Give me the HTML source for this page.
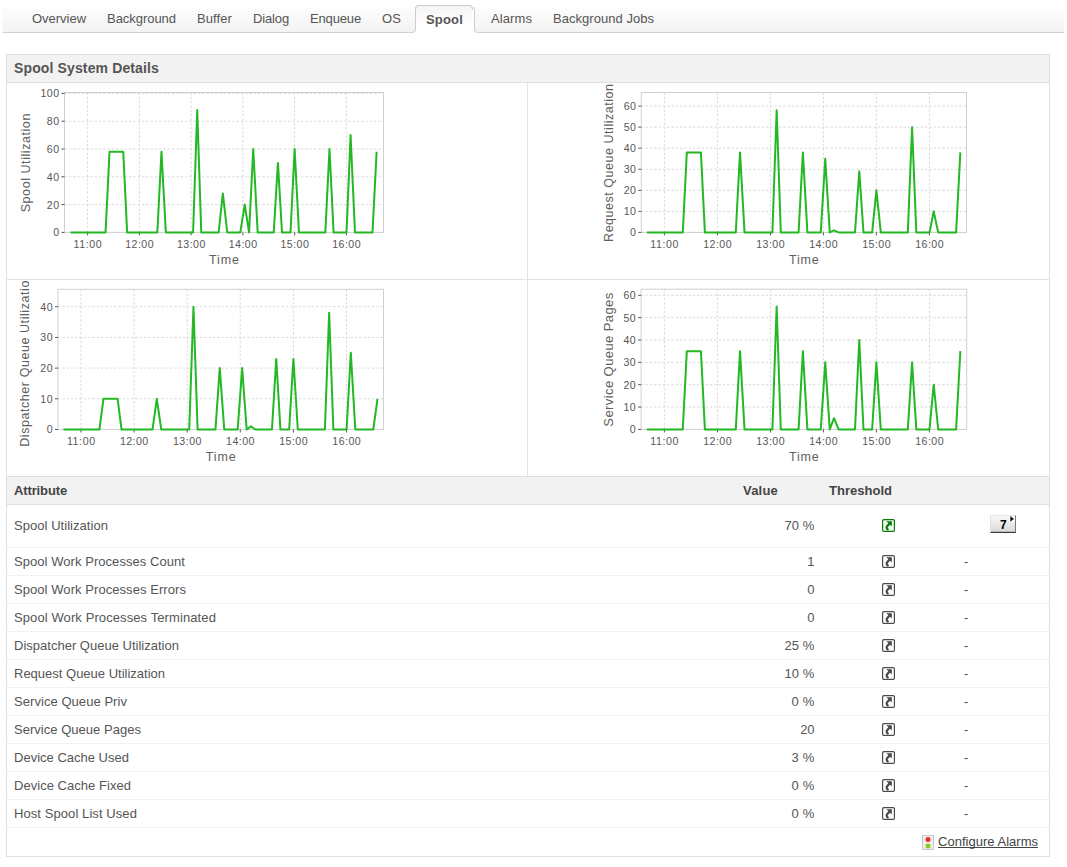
<!DOCTYPE html><html><head><meta charset="utf-8"><style>

*{margin:0;padding:0;box-sizing:border-box}
html,body{width:1067px;height:867px;background:#fff;overflow:hidden}
body{position:relative;font-family:"Liberation Sans", sans-serif;font-size:13px;color:#555}
.a{position:absolute;white-space:nowrap}
.tabbar{position:absolute;top:7px;height:26px;border-bottom:1px solid #d2d2d2;background:linear-gradient(#fdfdfd,#f3f3f3)}
.act{position:absolute;left:415px;top:5px;width:58px;height:24px;border:1px solid #c9c9c9;border-bottom:none;border-radius:4px 4px 0 0;background:linear-gradient(#f4f4f4,#fff 80%)}
.panel{position:absolute;left:6px;top:54px;width:1044px;height:803px;border:1px solid #dedede}
.hdr{position:absolute;left:7px;top:55px;width:1042px;height:28px;background:#f2f2f2;border-bottom:1px solid #dedede}
.vline{position:absolute;background:#e3e3e3}
.th{position:absolute;left:7px;top:476px;width:1042px;height:29px;background:#f2f2f2;border-top:1px solid #dedede;border-bottom:1px solid #dedede}
.row{position:absolute;left:7px;width:1042px;border-bottom:1px solid #f1f1f1}
.tk{font-family:"Liberation Sans", sans-serif;font-size:10.6px;fill:#585858}
.lb{font-family:"Liberation Sans", sans-serif;font-size:12.5px;fill:#606060}

</style></head><body>
<div class="act"></div>
<div class="tabbar" style="left:3px;width:413px;border-right:1px solid #cdcdcd;border-bottom-right-radius:4px"></div>
<div class="a" style="left:472px;top:10px;width:2px;height:20px;background:#fff"></div>
<div class="tabbar" style="left:474px;width:590px;border-left:1px solid #cdcdcd;border-bottom-left-radius:4px"></div>
<div class="a" style="top:7px;line-height:24px;font-size:13px;letter-spacing:-0.023px;left:32px;">Overview</div>
<div class="a" style="top:7px;line-height:24px;font-size:13px;letter-spacing:-0.039px;left:107px;">Background</div>
<div class="a" style="top:7px;line-height:24px;font-size:13px;letter-spacing:0.091px;left:197px;">Buffer</div>
<div class="a" style="top:7px;line-height:24px;font-size:13px;letter-spacing:-0.143px;left:253px;">Dialog</div>
<div class="a" style="top:7px;line-height:24px;font-size:13px;letter-spacing:-0.152px;left:310px;">Enqueue</div>
<div class="a" style="top:7px;line-height:24px;font-size:13px;letter-spacing:0.102px;left:382px;">OS</div>
<div class="a" style="top:7px;line-height:24px;font-size:13px;letter-spacing:0.091px;left:491px;">Alarms</div>
<div class="a" style="top:7px;line-height:24px;font-size:13px;letter-spacing:0.036px;left:553px;">Background Jobs</div>
<div class="a" style="top:8px;line-height:24px;font-size:13px;letter-spacing:0.178px;left:426px;font-weight:bold;">Spool</div>
<div class="panel"></div>
<div class="hdr"></div>
<div class="a" style="top:55px;line-height:27px;font-size:14px;letter-spacing:0.130px;left:14px;font-weight:bold;">Spool System Details</div>
<div class="vline" style="left:527px;top:83px;width:1px;height:393px"></div>
<div class="vline" style="left:7px;top:279px;width:1042px;height:1px"></div>
<svg class="a" style="left:0;top:0" width="1067" height="480" viewBox="0 0 1067 480">
<defs><clipPath id="c1"><rect x="7" y="83" width="520" height="196"/></clipPath><clipPath id="c2"><rect x="528" y="83" width="521" height="196"/></clipPath><clipPath id="c3"><rect x="7" y="280" width="520" height="196"/></clipPath><clipPath id="c4"><rect x="528" y="280" width="521" height="196"/></clipPath></defs>
<g clip-path="url(#c1)">
<line x1="64.5" y1="232.40" x2="383.5" y2="232.40" stroke="#dadada" stroke-width="1" stroke-dasharray="2.4,1.9"/>
<line x1="64.5" y1="204.60" x2="383.5" y2="204.60" stroke="#dadada" stroke-width="1" stroke-dasharray="2.4,1.9"/>
<line x1="64.5" y1="176.80" x2="383.5" y2="176.80" stroke="#dadada" stroke-width="1" stroke-dasharray="2.4,1.9"/>
<line x1="64.5" y1="149.00" x2="383.5" y2="149.00" stroke="#dadada" stroke-width="1" stroke-dasharray="2.4,1.9"/>
<line x1="64.5" y1="121.20" x2="383.5" y2="121.20" stroke="#dadada" stroke-width="1" stroke-dasharray="2.4,1.9"/>
<line x1="64.5" y1="93.40" x2="383.5" y2="93.40" stroke="#dadada" stroke-width="1" stroke-dasharray="2.4,1.9"/>
<line x1="87.60" y1="92.5" x2="87.60" y2="232.4" stroke="#dadada" stroke-width="1" stroke-dasharray="2.4,1.9"/>
<line x1="139.36" y1="92.5" x2="139.36" y2="232.4" stroke="#dadada" stroke-width="1" stroke-dasharray="2.4,1.9"/>
<line x1="191.12" y1="92.5" x2="191.12" y2="232.4" stroke="#dadada" stroke-width="1" stroke-dasharray="2.4,1.9"/>
<line x1="242.88" y1="92.5" x2="242.88" y2="232.4" stroke="#dadada" stroke-width="1" stroke-dasharray="2.4,1.9"/>
<line x1="294.64" y1="92.5" x2="294.64" y2="232.4" stroke="#dadada" stroke-width="1" stroke-dasharray="2.4,1.9"/>
<line x1="346.40" y1="92.5" x2="346.40" y2="232.4" stroke="#dadada" stroke-width="1" stroke-dasharray="2.4,1.9"/>
<rect x="64.5" y="92.5" width="319.0" height="139.9" fill="none" stroke="#d0d0d0" stroke-width="1"/>
<line x1="61.5" y1="232.40" x2="64.5" y2="232.40" stroke="#555" stroke-width="1"/>
<text x="59.56" y="236.30" text-anchor="end" class="tk" style="letter-spacing:0.456px">0</text>
<line x1="61.5" y1="204.60" x2="64.5" y2="204.60" stroke="#555" stroke-width="1"/>
<text x="59.56" y="208.50" text-anchor="end" class="tk" style="letter-spacing:0.464px">20</text>
<line x1="61.5" y1="176.80" x2="64.5" y2="176.80" stroke="#555" stroke-width="1"/>
<text x="59.56" y="180.70" text-anchor="end" class="tk" style="letter-spacing:0.464px">40</text>
<line x1="61.5" y1="149.00" x2="64.5" y2="149.00" stroke="#555" stroke-width="1"/>
<text x="59.56" y="152.90" text-anchor="end" class="tk" style="letter-spacing:0.464px">60</text>
<line x1="61.5" y1="121.20" x2="64.5" y2="121.20" stroke="#555" stroke-width="1"/>
<text x="59.56" y="125.10" text-anchor="end" class="tk" style="letter-spacing:0.464px">80</text>
<line x1="61.5" y1="93.40" x2="64.5" y2="93.40" stroke="#555" stroke-width="1"/>
<text x="59.57" y="97.30" text-anchor="end" class="tk" style="letter-spacing:0.466px">100</text>
<line x1="87.60" y1="232.4" x2="87.60" y2="235.4" stroke="#555" stroke-width="1"/>
<text x="87.91" y="248.20" text-anchor="middle" class="tk" style="letter-spacing:0.617px">11:00</text>
<line x1="139.36" y1="232.4" x2="139.36" y2="235.4" stroke="#555" stroke-width="1"/>
<text x="139.59" y="248.20" text-anchor="middle" class="tk" style="letter-spacing:0.461px">12:00</text>
<line x1="191.12" y1="232.4" x2="191.12" y2="235.4" stroke="#555" stroke-width="1"/>
<text x="191.35" y="248.20" text-anchor="middle" class="tk" style="letter-spacing:0.461px">13:00</text>
<line x1="242.88" y1="232.4" x2="242.88" y2="235.4" stroke="#555" stroke-width="1"/>
<text x="243.11" y="248.20" text-anchor="middle" class="tk" style="letter-spacing:0.461px">14:00</text>
<line x1="294.64" y1="232.4" x2="294.64" y2="235.4" stroke="#555" stroke-width="1"/>
<text x="294.87" y="248.20" text-anchor="middle" class="tk" style="letter-spacing:0.461px">15:00</text>
<line x1="346.40" y1="232.4" x2="346.40" y2="235.4" stroke="#555" stroke-width="1"/>
<text x="346.63" y="248.20" text-anchor="middle" class="tk" style="letter-spacing:0.461px">16:00</text>
<polyline points="70.52,232.40 105.56,232.40 109.49,151.78 114.10,151.78 118.66,151.78 123.26,151.78 127.14,232.40 157.32,232.40 161.46,151.78 165.86,232.40 193.09,232.40 197.23,110.08 201.26,232.40 218.66,232.40 222.85,193.48 227.25,232.40 240.29,232.40 244.69,204.60 249.09,232.40 253.23,149.00 257.68,232.40 273.73,232.40 277.92,162.90 282.01,232.40 290.50,232.40 294.64,149.00 298.94,232.40 325.33,232.40 329.47,149.00 333.62,232.40 346.50,232.40 350.59,135.10 354.99,232.40 372.49,232.40 376.63,151.78" fill="none" stroke="#24b824" stroke-width="2" stroke-linejoin="round"/>
<text x="224.4" y="264.2" text-anchor="middle" class="lb" style="letter-spacing:0.852px">Time</text>
<text transform="translate(29.8,162.7) rotate(-90)" x="0" y="0" text-anchor="middle" class="lb" style="font-size:12.50px;letter-spacing:0.562px">Spool Utilization</text>
</g>
<g clip-path="url(#c2)">
<line x1="641.3" y1="232.40" x2="966.5" y2="232.40" stroke="#dadada" stroke-width="1" stroke-dasharray="2.4,1.9"/>
<line x1="641.3" y1="211.35" x2="966.5" y2="211.35" stroke="#dadada" stroke-width="1" stroke-dasharray="2.4,1.9"/>
<line x1="641.3" y1="190.30" x2="966.5" y2="190.30" stroke="#dadada" stroke-width="1" stroke-dasharray="2.4,1.9"/>
<line x1="641.3" y1="169.25" x2="966.5" y2="169.25" stroke="#dadada" stroke-width="1" stroke-dasharray="2.4,1.9"/>
<line x1="641.3" y1="148.20" x2="966.5" y2="148.20" stroke="#dadada" stroke-width="1" stroke-dasharray="2.4,1.9"/>
<line x1="641.3" y1="127.15" x2="966.5" y2="127.15" stroke="#dadada" stroke-width="1" stroke-dasharray="2.4,1.9"/>
<line x1="641.3" y1="106.10" x2="966.5" y2="106.10" stroke="#dadada" stroke-width="1" stroke-dasharray="2.4,1.9"/>
<line x1="664.40" y1="92.5" x2="664.40" y2="232.4" stroke="#dadada" stroke-width="1" stroke-dasharray="2.4,1.9"/>
<line x1="717.40" y1="92.5" x2="717.40" y2="232.4" stroke="#dadada" stroke-width="1" stroke-dasharray="2.4,1.9"/>
<line x1="770.40" y1="92.5" x2="770.40" y2="232.4" stroke="#dadada" stroke-width="1" stroke-dasharray="2.4,1.9"/>
<line x1="823.40" y1="92.5" x2="823.40" y2="232.4" stroke="#dadada" stroke-width="1" stroke-dasharray="2.4,1.9"/>
<line x1="876.40" y1="92.5" x2="876.40" y2="232.4" stroke="#dadada" stroke-width="1" stroke-dasharray="2.4,1.9"/>
<line x1="929.40" y1="92.5" x2="929.40" y2="232.4" stroke="#dadada" stroke-width="1" stroke-dasharray="2.4,1.9"/>
<rect x="641.3" y="92.5" width="325.2" height="139.9" fill="none" stroke="#d0d0d0" stroke-width="1"/>
<line x1="638.3" y1="232.40" x2="641.3" y2="232.40" stroke="#555" stroke-width="1"/>
<text x="636.36" y="236.30" text-anchor="end" class="tk" style="letter-spacing:0.456px">0</text>
<line x1="638.3" y1="211.35" x2="641.3" y2="211.35" stroke="#555" stroke-width="1"/>
<text x="636.36" y="215.25" text-anchor="end" class="tk" style="letter-spacing:0.464px">10</text>
<line x1="638.3" y1="190.30" x2="641.3" y2="190.30" stroke="#555" stroke-width="1"/>
<text x="636.36" y="194.20" text-anchor="end" class="tk" style="letter-spacing:0.464px">20</text>
<line x1="638.3" y1="169.25" x2="641.3" y2="169.25" stroke="#555" stroke-width="1"/>
<text x="636.36" y="173.15" text-anchor="end" class="tk" style="letter-spacing:0.464px">30</text>
<line x1="638.3" y1="148.20" x2="641.3" y2="148.20" stroke="#555" stroke-width="1"/>
<text x="636.36" y="152.10" text-anchor="end" class="tk" style="letter-spacing:0.464px">40</text>
<line x1="638.3" y1="127.15" x2="641.3" y2="127.15" stroke="#555" stroke-width="1"/>
<text x="636.36" y="131.05" text-anchor="end" class="tk" style="letter-spacing:0.464px">50</text>
<line x1="638.3" y1="106.10" x2="641.3" y2="106.10" stroke="#555" stroke-width="1"/>
<text x="636.36" y="110.00" text-anchor="end" class="tk" style="letter-spacing:0.464px">60</text>
<line x1="664.40" y1="232.4" x2="664.40" y2="235.4" stroke="#555" stroke-width="1"/>
<text x="664.71" y="248.20" text-anchor="middle" class="tk" style="letter-spacing:0.617px">11:00</text>
<line x1="717.40" y1="232.4" x2="717.40" y2="235.4" stroke="#555" stroke-width="1"/>
<text x="717.63" y="248.20" text-anchor="middle" class="tk" style="letter-spacing:0.461px">12:00</text>
<line x1="770.40" y1="232.4" x2="770.40" y2="235.4" stroke="#555" stroke-width="1"/>
<text x="770.63" y="248.20" text-anchor="middle" class="tk" style="letter-spacing:0.461px">13:00</text>
<line x1="823.40" y1="232.4" x2="823.40" y2="235.4" stroke="#555" stroke-width="1"/>
<text x="823.63" y="248.20" text-anchor="middle" class="tk" style="letter-spacing:0.461px">14:00</text>
<line x1="876.40" y1="232.4" x2="876.40" y2="235.4" stroke="#555" stroke-width="1"/>
<text x="876.63" y="248.20" text-anchor="middle" class="tk" style="letter-spacing:0.461px">15:00</text>
<line x1="929.40" y1="232.4" x2="929.40" y2="235.4" stroke="#555" stroke-width="1"/>
<text x="929.63" y="248.20" text-anchor="middle" class="tk" style="letter-spacing:0.461px">16:00</text>
<polyline points="646.91,232.40 682.79,232.40 686.82,152.41 691.54,152.41 696.20,152.41 700.92,152.41 704.89,232.40 735.79,232.40 740.03,152.41 744.54,232.40 772.41,232.40 776.65,110.31 780.79,232.40 798.60,232.40 802.89,152.41 807.39,232.40 820.75,232.40 825.25,158.73 829.76,232.40 834.00,230.30 838.56,232.40 854.99,232.40 859.28,171.36 863.47,232.40 872.16,232.40 876.40,190.30 880.80,232.40 907.83,232.40 912.07,127.15 916.31,232.40 929.51,232.40 933.69,211.35 938.20,232.40 956.11,232.40 960.35,152.41" fill="none" stroke="#24b824" stroke-width="2" stroke-linejoin="round"/>
<text x="804.3" y="264.2" text-anchor="middle" class="lb" style="letter-spacing:0.852px">Time</text>
<text transform="translate(613.0,162.7) rotate(-90)" x="0" y="0" text-anchor="middle" class="lb" style="font-size:12.50px;letter-spacing:0.529px">Request Queue Utilization</text>
</g>
<g clip-path="url(#c3)">
<line x1="58.0" y1="429.50" x2="383.5" y2="429.50" stroke="#dadada" stroke-width="1" stroke-dasharray="2.4,1.9"/>
<line x1="58.0" y1="398.80" x2="383.5" y2="398.80" stroke="#dadada" stroke-width="1" stroke-dasharray="2.4,1.9"/>
<line x1="58.0" y1="368.10" x2="383.5" y2="368.10" stroke="#dadada" stroke-width="1" stroke-dasharray="2.4,1.9"/>
<line x1="58.0" y1="337.40" x2="383.5" y2="337.40" stroke="#dadada" stroke-width="1" stroke-dasharray="2.4,1.9"/>
<line x1="58.0" y1="306.70" x2="383.5" y2="306.70" stroke="#dadada" stroke-width="1" stroke-dasharray="2.4,1.9"/>
<line x1="81.00" y1="289.3" x2="81.00" y2="429.5" stroke="#dadada" stroke-width="1" stroke-dasharray="2.4,1.9"/>
<line x1="134.10" y1="289.3" x2="134.10" y2="429.5" stroke="#dadada" stroke-width="1" stroke-dasharray="2.4,1.9"/>
<line x1="187.20" y1="289.3" x2="187.20" y2="429.5" stroke="#dadada" stroke-width="1" stroke-dasharray="2.4,1.9"/>
<line x1="240.30" y1="289.3" x2="240.30" y2="429.5" stroke="#dadada" stroke-width="1" stroke-dasharray="2.4,1.9"/>
<line x1="293.40" y1="289.3" x2="293.40" y2="429.5" stroke="#dadada" stroke-width="1" stroke-dasharray="2.4,1.9"/>
<line x1="346.50" y1="289.3" x2="346.50" y2="429.5" stroke="#dadada" stroke-width="1" stroke-dasharray="2.4,1.9"/>
<rect x="58.0" y="289.3" width="325.5" height="140.2" fill="none" stroke="#d0d0d0" stroke-width="1"/>
<line x1="55.0" y1="429.50" x2="58.0" y2="429.50" stroke="#555" stroke-width="1"/>
<text x="53.06" y="433.40" text-anchor="end" class="tk" style="letter-spacing:0.456px">0</text>
<line x1="55.0" y1="398.80" x2="58.0" y2="398.80" stroke="#555" stroke-width="1"/>
<text x="53.06" y="402.70" text-anchor="end" class="tk" style="letter-spacing:0.464px">10</text>
<line x1="55.0" y1="368.10" x2="58.0" y2="368.10" stroke="#555" stroke-width="1"/>
<text x="53.06" y="372.00" text-anchor="end" class="tk" style="letter-spacing:0.464px">20</text>
<line x1="55.0" y1="337.40" x2="58.0" y2="337.40" stroke="#555" stroke-width="1"/>
<text x="53.06" y="341.30" text-anchor="end" class="tk" style="letter-spacing:0.464px">30</text>
<line x1="55.0" y1="306.70" x2="58.0" y2="306.70" stroke="#555" stroke-width="1"/>
<text x="53.06" y="310.60" text-anchor="end" class="tk" style="letter-spacing:0.464px">40</text>
<line x1="81.00" y1="429.5" x2="81.00" y2="432.5" stroke="#555" stroke-width="1"/>
<text x="81.31" y="445.30" text-anchor="middle" class="tk" style="letter-spacing:0.617px">11:00</text>
<line x1="134.10" y1="429.5" x2="134.10" y2="432.5" stroke="#555" stroke-width="1"/>
<text x="134.33" y="445.30" text-anchor="middle" class="tk" style="letter-spacing:0.461px">12:00</text>
<line x1="187.20" y1="429.5" x2="187.20" y2="432.5" stroke="#555" stroke-width="1"/>
<text x="187.43" y="445.30" text-anchor="middle" class="tk" style="letter-spacing:0.461px">13:00</text>
<line x1="240.30" y1="429.5" x2="240.30" y2="432.5" stroke="#555" stroke-width="1"/>
<text x="240.53" y="445.30" text-anchor="middle" class="tk" style="letter-spacing:0.461px">14:00</text>
<line x1="293.40" y1="429.5" x2="293.40" y2="432.5" stroke="#555" stroke-width="1"/>
<text x="293.63" y="445.30" text-anchor="middle" class="tk" style="letter-spacing:0.461px">15:00</text>
<line x1="346.50" y1="429.5" x2="346.50" y2="432.5" stroke="#555" stroke-width="1"/>
<text x="346.73" y="445.30" text-anchor="middle" class="tk" style="letter-spacing:0.461px">16:00</text>
<polyline points="63.48,429.50 99.43,429.50 103.46,398.80 108.19,398.80 112.86,398.80 117.59,398.80 121.57,429.50 152.53,429.50 156.77,398.80 161.29,429.50 189.22,429.50 193.47,306.70 197.61,429.50 215.45,429.50 219.75,368.10 224.26,429.50 237.65,429.50 242.16,368.10 246.67,429.50 250.92,426.43 255.49,429.50 271.95,429.50 276.25,358.89 280.44,429.50 289.15,429.50 293.40,358.89 297.81,429.50 324.89,429.50 329.14,312.84 333.38,429.50 346.61,429.50 350.80,352.75 355.31,429.50 373.26,429.50 377.51,398.80" fill="none" stroke="#24b824" stroke-width="2" stroke-linejoin="round"/>
<text x="221.2" y="461.3" text-anchor="middle" class="lb" style="letter-spacing:0.852px">Time</text>
<text transform="translate(28.5,359.7) rotate(-90)" x="0" y="0" text-anchor="middle" class="lb" style="font-size:12.50px;letter-spacing:0.564px">Dispatcher Queue Utilization</text>
</g>
<g clip-path="url(#c4)">
<line x1="641.1" y1="429.40" x2="966.7" y2="429.40" stroke="#dadada" stroke-width="1" stroke-dasharray="2.4,1.9"/>
<line x1="641.1" y1="407.05" x2="966.7" y2="407.05" stroke="#dadada" stroke-width="1" stroke-dasharray="2.4,1.9"/>
<line x1="641.1" y1="384.70" x2="966.7" y2="384.70" stroke="#dadada" stroke-width="1" stroke-dasharray="2.4,1.9"/>
<line x1="641.1" y1="362.35" x2="966.7" y2="362.35" stroke="#dadada" stroke-width="1" stroke-dasharray="2.4,1.9"/>
<line x1="641.1" y1="340.00" x2="966.7" y2="340.00" stroke="#dadada" stroke-width="1" stroke-dasharray="2.4,1.9"/>
<line x1="641.1" y1="317.65" x2="966.7" y2="317.65" stroke="#dadada" stroke-width="1" stroke-dasharray="2.4,1.9"/>
<line x1="641.1" y1="295.30" x2="966.7" y2="295.30" stroke="#dadada" stroke-width="1" stroke-dasharray="2.4,1.9"/>
<line x1="664.40" y1="289.2" x2="664.40" y2="429.4" stroke="#dadada" stroke-width="1" stroke-dasharray="2.4,1.9"/>
<line x1="717.40" y1="289.2" x2="717.40" y2="429.4" stroke="#dadada" stroke-width="1" stroke-dasharray="2.4,1.9"/>
<line x1="770.40" y1="289.2" x2="770.40" y2="429.4" stroke="#dadada" stroke-width="1" stroke-dasharray="2.4,1.9"/>
<line x1="823.40" y1="289.2" x2="823.40" y2="429.4" stroke="#dadada" stroke-width="1" stroke-dasharray="2.4,1.9"/>
<line x1="876.40" y1="289.2" x2="876.40" y2="429.4" stroke="#dadada" stroke-width="1" stroke-dasharray="2.4,1.9"/>
<line x1="929.40" y1="289.2" x2="929.40" y2="429.4" stroke="#dadada" stroke-width="1" stroke-dasharray="2.4,1.9"/>
<rect x="641.1" y="289.2" width="325.6" height="140.2" fill="none" stroke="#d0d0d0" stroke-width="1"/>
<line x1="638.1" y1="429.40" x2="641.1" y2="429.40" stroke="#555" stroke-width="1"/>
<text x="636.16" y="433.30" text-anchor="end" class="tk" style="letter-spacing:0.456px">0</text>
<line x1="638.1" y1="407.05" x2="641.1" y2="407.05" stroke="#555" stroke-width="1"/>
<text x="636.16" y="410.95" text-anchor="end" class="tk" style="letter-spacing:0.464px">10</text>
<line x1="638.1" y1="384.70" x2="641.1" y2="384.70" stroke="#555" stroke-width="1"/>
<text x="636.16" y="388.60" text-anchor="end" class="tk" style="letter-spacing:0.464px">20</text>
<line x1="638.1" y1="362.35" x2="641.1" y2="362.35" stroke="#555" stroke-width="1"/>
<text x="636.16" y="366.25" text-anchor="end" class="tk" style="letter-spacing:0.464px">30</text>
<line x1="638.1" y1="340.00" x2="641.1" y2="340.00" stroke="#555" stroke-width="1"/>
<text x="636.16" y="343.90" text-anchor="end" class="tk" style="letter-spacing:0.464px">40</text>
<line x1="638.1" y1="317.65" x2="641.1" y2="317.65" stroke="#555" stroke-width="1"/>
<text x="636.16" y="321.55" text-anchor="end" class="tk" style="letter-spacing:0.464px">50</text>
<line x1="638.1" y1="295.30" x2="641.1" y2="295.30" stroke="#555" stroke-width="1"/>
<text x="636.16" y="299.20" text-anchor="end" class="tk" style="letter-spacing:0.464px">60</text>
<line x1="664.40" y1="429.4" x2="664.40" y2="432.4" stroke="#555" stroke-width="1"/>
<text x="664.71" y="445.20" text-anchor="middle" class="tk" style="letter-spacing:0.617px">11:00</text>
<line x1="717.40" y1="429.4" x2="717.40" y2="432.4" stroke="#555" stroke-width="1"/>
<text x="717.63" y="445.20" text-anchor="middle" class="tk" style="letter-spacing:0.461px">12:00</text>
<line x1="770.40" y1="429.4" x2="770.40" y2="432.4" stroke="#555" stroke-width="1"/>
<text x="770.63" y="445.20" text-anchor="middle" class="tk" style="letter-spacing:0.461px">13:00</text>
<line x1="823.40" y1="429.4" x2="823.40" y2="432.4" stroke="#555" stroke-width="1"/>
<text x="823.63" y="445.20" text-anchor="middle" class="tk" style="letter-spacing:0.461px">14:00</text>
<line x1="876.40" y1="429.4" x2="876.40" y2="432.4" stroke="#555" stroke-width="1"/>
<text x="876.63" y="445.20" text-anchor="middle" class="tk" style="letter-spacing:0.461px">15:00</text>
<line x1="929.40" y1="429.4" x2="929.40" y2="432.4" stroke="#555" stroke-width="1"/>
<text x="929.63" y="445.20" text-anchor="middle" class="tk" style="letter-spacing:0.461px">16:00</text>
<polyline points="646.91,429.40 682.79,429.40 686.82,351.17 691.54,351.17 696.20,351.17 700.92,351.17 704.89,429.40 735.79,429.40 740.03,351.17 744.54,429.40 772.41,429.40 776.65,306.47 780.79,429.40 798.60,429.40 802.89,351.17 807.39,429.40 820.75,429.40 825.25,362.35 829.76,429.40 834.00,418.22 838.56,429.40 854.99,429.40 859.28,340.00 863.47,429.40 872.16,429.40 876.40,362.35 880.80,429.40 907.83,429.40 912.07,362.35 916.31,429.40 929.51,429.40 933.69,384.70 938.20,429.40 956.11,429.40 960.35,351.17" fill="none" stroke="#24b824" stroke-width="2" stroke-linejoin="round"/>
<text x="804.3" y="461.2" text-anchor="middle" class="lb" style="letter-spacing:0.852px">Time</text>
<text transform="translate(613.0,359.5) rotate(-90)" x="0" y="0" text-anchor="middle" class="lb" style="font-size:13.00px;letter-spacing:0.414px">Service Queue Pages</text>
</g>
</svg>
<div class="th"></div>
<div class="a" style="top:477px;line-height:27px;font-size:13px;letter-spacing:-0.130px;left:14px;font-weight:bold;color:#444;">Attribute</div>
<div class="a" style="top:477px;line-height:27px;font-size:13px;letter-spacing:0.206px;left:743px;font-weight:bold;color:#444;">Value</div>
<div class="a" style="top:477px;line-height:27px;font-size:13px;letter-spacing:0.017px;left:829px;font-weight:bold;color:#444;">Threshold</div>
<div class="row" style="top:505px;height:43px"></div>
<div class="a" style="top:505px;line-height:42px;font-size:13px;letter-spacing:0.046px;left:14px;">Spool Utilization</div>
<div class="a" style="top:505px;line-height:42px;font-size:13px;letter-spacing:0.090px;right:252.51px;">70 %</div>
<svg class="a" style="left:882px;top:519px" width="13" height="13" viewBox="0 0 13 13"><rect x="0.6" y="0.6" width="11.8" height="11.8" rx="1.2" ry="1.2" fill="#f2fbf2" stroke="#077a07" stroke-width="1.2"/><path d="M4.3 2.2 L9.8 2.2 L9.8 7.6 Z" fill="#077a07"/><path d="M7.9 4.3 L5.3 7 C4.3 8.1 4.6 9.6 5.7 10.4" fill="none" stroke="#077a07" stroke-width="2.3" stroke-linecap="round" stroke-linejoin="round"/></svg>
<div class="row" style="top:548px;height:28px"></div>
<div class="a" style="top:548px;line-height:27px;font-size:13px;letter-spacing:0.055px;left:14px;">Spool Work Processes Count</div>
<div class="a" style="top:548px;line-height:27px;font-size:13px;letter-spacing:-0.234px;right:252.83px;">1</div>
<svg class="a" style="left:882px;top:555px" width="13" height="13" viewBox="0 0 13 13"><rect x="0.6" y="0.6" width="11.8" height="11.8" rx="1.2" ry="1.2" fill="#fff" stroke="#4a4a4a" stroke-width="1.2"/><path d="M4.3 2.2 L9.8 2.2 L9.8 7.6 Z" fill="#4a4a4a"/><path d="M7.9 4.3 L5.3 7 C4.3 8.1 4.6 9.6 5.7 10.4" fill="none" stroke="#4a4a4a" stroke-width="2.3" stroke-linecap="round" stroke-linejoin="round"/></svg>
<div class="a" style="top:548px;line-height:27px;font-size:13px;letter-spacing:-0.344px;left:964px;">-</div>
<div class="row" style="top:576px;height:28px"></div>
<div class="a" style="top:576px;line-height:27px;font-size:13px;letter-spacing:0.064px;left:14px;">Spool Work Processes Errors</div>
<div class="a" style="top:576px;line-height:27px;font-size:13px;letter-spacing:-0.234px;right:252.83px;">0</div>
<svg class="a" style="left:882px;top:583px" width="13" height="13" viewBox="0 0 13 13"><rect x="0.6" y="0.6" width="11.8" height="11.8" rx="1.2" ry="1.2" fill="#fff" stroke="#4a4a4a" stroke-width="1.2"/><path d="M4.3 2.2 L9.8 2.2 L9.8 7.6 Z" fill="#4a4a4a"/><path d="M7.9 4.3 L5.3 7 C4.3 8.1 4.6 9.6 5.7 10.4" fill="none" stroke="#4a4a4a" stroke-width="2.3" stroke-linecap="round" stroke-linejoin="round"/></svg>
<div class="a" style="top:576px;line-height:27px;font-size:13px;letter-spacing:-0.344px;left:964px;">-</div>
<div class="row" style="top:604px;height:28px"></div>
<div class="a" style="top:604px;line-height:27px;font-size:13px;letter-spacing:0.098px;left:14px;">Spool Work Processes Terminated</div>
<div class="a" style="top:604px;line-height:27px;font-size:13px;letter-spacing:-0.234px;right:252.83px;">0</div>
<svg class="a" style="left:882px;top:611px" width="13" height="13" viewBox="0 0 13 13"><rect x="0.6" y="0.6" width="11.8" height="11.8" rx="1.2" ry="1.2" fill="#fff" stroke="#4a4a4a" stroke-width="1.2"/><path d="M4.3 2.2 L9.8 2.2 L9.8 7.6 Z" fill="#4a4a4a"/><path d="M7.9 4.3 L5.3 7 C4.3 8.1 4.6 9.6 5.7 10.4" fill="none" stroke="#4a4a4a" stroke-width="2.3" stroke-linecap="round" stroke-linejoin="round"/></svg>
<div class="a" style="top:604px;line-height:27px;font-size:13px;letter-spacing:-0.344px;left:964px;">-</div>
<div class="row" style="top:632px;height:28px"></div>
<div class="a" style="top:632px;line-height:27px;font-size:13px;letter-spacing:0.009px;left:14px;">Dispatcher Queue Utilization</div>
<div class="a" style="top:632px;line-height:27px;font-size:13px;letter-spacing:0.090px;right:252.51px;">25 %</div>
<svg class="a" style="left:882px;top:639px" width="13" height="13" viewBox="0 0 13 13"><rect x="0.6" y="0.6" width="11.8" height="11.8" rx="1.2" ry="1.2" fill="#fff" stroke="#4a4a4a" stroke-width="1.2"/><path d="M4.3 2.2 L9.8 2.2 L9.8 7.6 Z" fill="#4a4a4a"/><path d="M7.9 4.3 L5.3 7 C4.3 8.1 4.6 9.6 5.7 10.4" fill="none" stroke="#4a4a4a" stroke-width="2.3" stroke-linecap="round" stroke-linejoin="round"/></svg>
<div class="a" style="top:632px;line-height:27px;font-size:13px;letter-spacing:-0.344px;left:964px;">-</div>
<div class="row" style="top:660px;height:28px"></div>
<div class="a" style="top:660px;line-height:27px;font-size:13px;letter-spacing:-0.001px;left:14px;">Request Queue Utilization</div>
<div class="a" style="top:660px;line-height:27px;font-size:13px;letter-spacing:0.090px;right:252.51px;">10 %</div>
<svg class="a" style="left:882px;top:667px" width="13" height="13" viewBox="0 0 13 13"><rect x="0.6" y="0.6" width="11.8" height="11.8" rx="1.2" ry="1.2" fill="#fff" stroke="#4a4a4a" stroke-width="1.2"/><path d="M4.3 2.2 L9.8 2.2 L9.8 7.6 Z" fill="#4a4a4a"/><path d="M7.9 4.3 L5.3 7 C4.3 8.1 4.6 9.6 5.7 10.4" fill="none" stroke="#4a4a4a" stroke-width="2.3" stroke-linecap="round" stroke-linejoin="round"/></svg>
<div class="a" style="top:660px;line-height:27px;font-size:13px;letter-spacing:-0.344px;left:964px;">-</div>
<div class="row" style="top:688px;height:28px"></div>
<div class="a" style="top:688px;line-height:27px;font-size:13px;letter-spacing:0.056px;left:14px;">Service Queue Priv</div>
<div class="a" style="top:688px;line-height:27px;font-size:13px;letter-spacing:0.198px;right:252.40px;">0 %</div>
<svg class="a" style="left:882px;top:695px" width="13" height="13" viewBox="0 0 13 13"><rect x="0.6" y="0.6" width="11.8" height="11.8" rx="1.2" ry="1.2" fill="#fff" stroke="#4a4a4a" stroke-width="1.2"/><path d="M4.3 2.2 L9.8 2.2 L9.8 7.6 Z" fill="#4a4a4a"/><path d="M7.9 4.3 L5.3 7 C4.3 8.1 4.6 9.6 5.7 10.4" fill="none" stroke="#4a4a4a" stroke-width="2.3" stroke-linecap="round" stroke-linejoin="round"/></svg>
<div class="a" style="top:688px;line-height:27px;font-size:13px;letter-spacing:-0.344px;left:964px;">-</div>
<div class="row" style="top:716px;height:28px"></div>
<div class="a" style="top:716px;line-height:27px;font-size:13px;letter-spacing:0.028px;left:14px;">Service Queue Pages</div>
<div class="a" style="top:716px;line-height:27px;font-size:13px;letter-spacing:-0.234px;right:252.83px;">20</div>
<svg class="a" style="left:882px;top:723px" width="13" height="13" viewBox="0 0 13 13"><rect x="0.6" y="0.6" width="11.8" height="11.8" rx="1.2" ry="1.2" fill="#fff" stroke="#4a4a4a" stroke-width="1.2"/><path d="M4.3 2.2 L9.8 2.2 L9.8 7.6 Z" fill="#4a4a4a"/><path d="M7.9 4.3 L5.3 7 C4.3 8.1 4.6 9.6 5.7 10.4" fill="none" stroke="#4a4a4a" stroke-width="2.3" stroke-linecap="round" stroke-linejoin="round"/></svg>
<div class="a" style="top:716px;line-height:27px;font-size:13px;letter-spacing:-0.344px;left:964px;">-</div>
<div class="row" style="top:744px;height:28px"></div>
<div class="a" style="top:744px;line-height:27px;font-size:13px;letter-spacing:0.006px;left:14px;">Device Cache Used</div>
<div class="a" style="top:744px;line-height:27px;font-size:13px;letter-spacing:0.198px;right:252.40px;">3 %</div>
<svg class="a" style="left:882px;top:751px" width="13" height="13" viewBox="0 0 13 13"><rect x="0.6" y="0.6" width="11.8" height="11.8" rx="1.2" ry="1.2" fill="#fff" stroke="#4a4a4a" stroke-width="1.2"/><path d="M4.3 2.2 L9.8 2.2 L9.8 7.6 Z" fill="#4a4a4a"/><path d="M7.9 4.3 L5.3 7 C4.3 8.1 4.6 9.6 5.7 10.4" fill="none" stroke="#4a4a4a" stroke-width="2.3" stroke-linecap="round" stroke-linejoin="round"/></svg>
<div class="a" style="top:744px;line-height:27px;font-size:13px;letter-spacing:-0.344px;left:964px;">-</div>
<div class="row" style="top:772px;height:28px"></div>
<div class="a" style="top:772px;line-height:27px;font-size:13px;letter-spacing:0.037px;left:14px;">Device Cache Fixed</div>
<div class="a" style="top:772px;line-height:27px;font-size:13px;letter-spacing:0.198px;right:252.40px;">0 %</div>
<svg class="a" style="left:882px;top:779px" width="13" height="13" viewBox="0 0 13 13"><rect x="0.6" y="0.6" width="11.8" height="11.8" rx="1.2" ry="1.2" fill="#fff" stroke="#4a4a4a" stroke-width="1.2"/><path d="M4.3 2.2 L9.8 2.2 L9.8 7.6 Z" fill="#4a4a4a"/><path d="M7.9 4.3 L5.3 7 C4.3 8.1 4.6 9.6 5.7 10.4" fill="none" stroke="#4a4a4a" stroke-width="2.3" stroke-linecap="round" stroke-linejoin="round"/></svg>
<div class="a" style="top:772px;line-height:27px;font-size:13px;letter-spacing:-0.344px;left:964px;">-</div>
<div class="row" style="top:800px;height:28px"></div>
<div class="a" style="top:800px;line-height:27px;font-size:13px;letter-spacing:0.080px;left:14px;">Host Spool List Used</div>
<div class="a" style="top:800px;line-height:27px;font-size:13px;letter-spacing:0.198px;right:252.40px;">0 %</div>
<svg class="a" style="left:882px;top:807px" width="13" height="13" viewBox="0 0 13 13"><rect x="0.6" y="0.6" width="11.8" height="11.8" rx="1.2" ry="1.2" fill="#fff" stroke="#4a4a4a" stroke-width="1.2"/><path d="M4.3 2.2 L9.8 2.2 L9.8 7.6 Z" fill="#4a4a4a"/><path d="M7.9 4.3 L5.3 7 C4.3 8.1 4.6 9.6 5.7 10.4" fill="none" stroke="#4a4a4a" stroke-width="2.3" stroke-linecap="round" stroke-linejoin="round"/></svg>
<div class="a" style="top:800px;line-height:27px;font-size:13px;letter-spacing:-0.344px;left:964px;">-</div>
<div class="a" style="left:990px;top:515px;width:26px;height:18px;background:linear-gradient(#f8f8f8,#d9d9d9);border-bottom:1px solid #3a3a3a;border-right:1px solid #777;border-left:1px solid #e0e0e0;border-top:1px solid #e8e8e8;box-shadow:inset 0 -1px 0 #bbb"></div>
<div class="a" style="left:1009px;top:516px;width:6px;height:6px;background:#fff"></div>
<div class="a" style="top:517px;line-height:16px;font-size:12px;letter-spacing:0.312px;left:1000px;font-weight:bold;color:#000;">7</div>
<svg class="a" style="left:1010px;top:516px" width="5" height="6"><path d="M0.3 0 L4 2.9 L0.3 5.8 Z" fill="#111"/></svg>
<svg class="a" style="left:922px;top:835px" width="12" height="15" viewBox="0 0 12 15"><rect x="0.5" y="0.5" width="11" height="14" fill="#eee" stroke="#c8c8c8"/><circle cx="6" cy="4.6" r="2.5" fill="#e8321e"/><circle cx="6" cy="11.1" r="2.5" fill="#8ccc1a"/></svg>
<div class="a" style="top:828px;line-height:27px;font-size:13px;letter-spacing:0.018px;left:938px;color:#444;text-decoration:underline;text-decoration-skip-ink:none;">Configure Alarms</div>
</body></html>
